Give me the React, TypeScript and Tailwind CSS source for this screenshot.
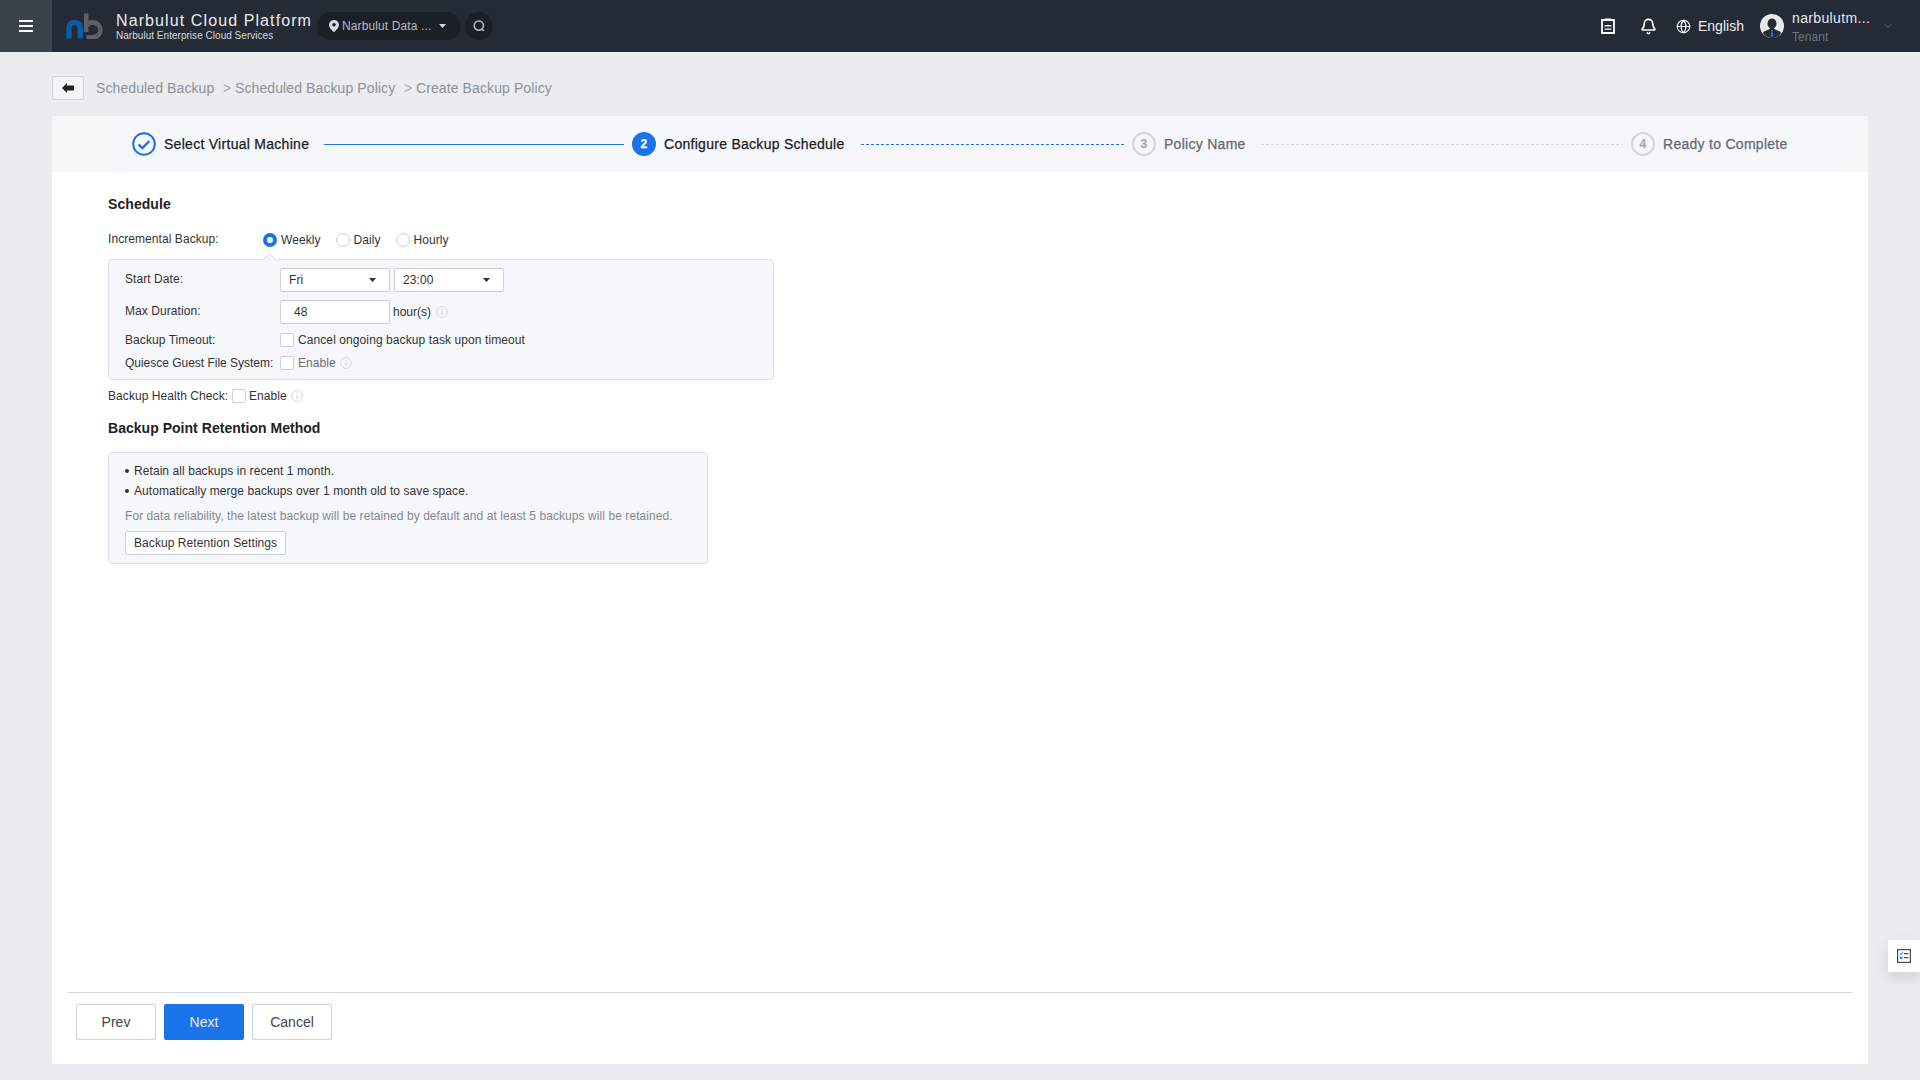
import React from "react";
import { Globe, Bell, ChevronDown } from "lucide-react";

function Caret({ className = "" }: { className?: string }) {
  return (
    <svg width="7" height="4" viewBox="0 0 7 4" className={className}>
      <path d="M0 0h7L3.5 4z" fill="currentColor" />
    </svg>
  );
}

function Logo() {
  return (
    <svg width="38" height="26" viewBox="0 0 38 26" className="shrink-0">
      <path d="M3 25.5V14.5c0-3 2.4-5 5.6-5s5.6 2 5.6 5v11" fill="none" stroke="#0b5cab" strokeWidth="5.4" />
      <path d="M20.2 0.5V19" fill="none" stroke="#5e6064" strokeWidth="4.4" />
      <path d="M20.5 12.3c1.4-1.9 3.4-2.9 6-2.9 4.4 0 8 3.4 8 7.6s-3.6 7.4-8 7.4h-6" fill="none" stroke="#5e6064" strokeWidth="4.6" />
    </svg>
  );
}

function Avatar() {
  return (
    <svg width="24" height="24" viewBox="0 0 24 24" className="shrink-0">
      <circle cx="12" cy="12" r="12" fill="#e9e9e9" />
      <path d="M12 4.6c-2.7 0-4.5 2.1-4.5 4.8 0 1.9.9 3.6 2.3 4.5v1.2l-4.6 2c-.9.4-1.7 1-2.2 2.1A12 12 0 0 0 12 24a12 12 0 0 0 9-4.8c-.5-1.1-1.3-1.7-2.2-2.1l-4.6-2v-1.2c1.4-.9 2.3-2.6 2.3-4.5 0-2.7-1.8-4.8-4.5-4.8z" fill="#262c36" />
      <path d="M11 16.2h2v1.4h-2zM11.1 18.2h1.8l.5 4.6h-2.8z" fill="#1a73e8" />
    </svg>
  );
}

function Radio({ checked, label }: { checked?: boolean; label: string }) {
  return (
    <div className="flex items-center gap-[4px]">
      {checked ? (
        <span className="flex h-[14px] w-[14px] items-center justify-center rounded-full bg-[#1a73e8]">
          <span className="h-[6px] w-[6px] rounded-full bg-white" />
        </span>
      ) : (
        <span className="h-[14px] w-[14px] rounded-full border border-[#ccd1da] bg-white" />
      )}
      <span>{label}</span>
    </div>
  );
}

function Check() {
  return <span className="h-[14px] w-[14px] shrink-0 rounded-[2px] border border-[#ccd1da] bg-white" />;
}

function Tip({ className = "" }: { className?: string }) {
  return (
    <svg width="12" height="12" viewBox="0 0 12 12" fill="none" className={`shrink-0 ${className}`}>
      <circle cx="6" cy="6" r="5.4" stroke="#d3d9e2" strokeWidth="1" />
      <path d="M6 5.2v3.6" stroke="#c3c9d3" strokeWidth="1" />
      <path d="M6 3v1.1" stroke="#c3c9d3" strokeWidth="1" />
    </svg>
  );
}

function Select({ value, className = "" }: { value: string; className?: string }) {
  return (
    <div className={`flex h-[24px] items-center justify-between rounded-[2px] border border-[#ccd1da] bg-white pl-[8px] pr-[13px] ${className}`}>
      <span>{value}</span>
      <Caret className="text-[#333]" />
    </div>
  );
}

function Num({ n, done }: { n: string; done?: boolean }) {
  return done ? (
    <span className="flex h-[24px] w-[24px] shrink-0 items-center justify-center rounded-full bg-[#1a73e8] text-[12px] font-bold text-white">{n}</span>
  ) : (
    <span className="flex h-[24px] w-[24px] shrink-0 items-center justify-center rounded-full border-2 border-[#d2d6de] text-[12px] font-bold text-[#a5a9b2]">{n}</span>
  );
}

export default function App() {
  return (
    <div className="relative flex h-[1080px] w-[1920px] flex-col overflow-hidden bg-[#ebecf0] [font-family:'Liberation_Sans',Arial,sans-serif] text-[12px] tracking-[0.07px] text-[#333]">
      <header className="flex h-[52px] shrink-0 items-center bg-[#242b36] text-white">
        <div className="flex h-[52px] w-[52px] shrink-0 items-center justify-center bg-[#3a424c]">
          <svg width="14" height="12" viewBox="0 0 14 12" fill="#fff">
            <path d="M0 0h14v2H0zM0 5h14v2H0zM0 10h14v2H0z" />
          </svg>
        </div>
        <div className="ml-[14px] flex items-center">
          <Logo />
        </div>
        <div className="ml-[12px] flex w-[201px] shrink-0 flex-col">
          <span className="text-[16px] leading-[20px] tracking-[1.1px] text-[#e9ebee] whitespace-nowrap">Narbulut Cloud Platform</span>
          <span className="mt-[-1px] text-[10px] leading-[12px] tracking-[0.03px] text-[#d6d9de] whitespace-nowrap">Narbulut Enterprise Cloud Services</span>
        </div>
        <div className="flex h-[28px] w-[144px] shrink-0 items-center rounded-full bg-[#1b2028] pl-[12px] text-[#b5b9c0]">
          <svg width="10" height="12" viewBox="0 0 10 12" className="shrink-0">
            <path fillRule="evenodd" d="M5 0C2.2 0 0 2.2 0 4.9 0 8.2 5 12 5 12s5-3.8 5-7.1C10 2.2 7.8 0 5 0zm0 6.6a1.8 1.8 0 1 1 0-3.6 1.8 1.8 0 0 1 0 3.6z" fill="#d8dade" />
          </svg>
          <span className="ml-[3px] w-[90px] whitespace-nowrap tracking-[0.12px]">Narbulut Data ...</span>
          <Caret className="ml-[7px] text-[#d8dade]" />
        </div>
        <div className="ml-[4px] flex h-[28px] w-[28px] shrink-0 items-center justify-center rounded-full bg-[#1b2028]">
          <svg width="14" height="14" viewBox="0 0 14 14" fill="none" stroke="#b5b9c0" strokeWidth="1.6">
            <circle cx="6.8" cy="6.6" r="4.6" />
            <path d="M9.8 10l2 2" />
          </svg>
        </div>
        <div className="ml-auto flex items-center">
          <svg width="14" height="16" viewBox="0 0 14 16" className="shrink-0">
            <path d="M1 2h12v13H1z" fill="none" stroke="#fff" strokeWidth="1.8" />
            <path d="M3.5 0.5h7v2.5h-7zM3.6 7h6.8v1.4H3.6zM3.6 10.4h6.8v1.4H3.6z" fill="#fff" />
          </svg>
          <Bell size={17} strokeWidth={2.3} className="ml-[25px] text-white" />
          <Globe size={15} strokeWidth={1.8} className="ml-[19px] text-white" />
          <span className="ml-[7px] w-[45px] text-[14px] leading-[20px] tracking-normal text-[#eceef1]">English</span>
          <div className="ml-[17px]">
            <Avatar />
          </div>
          <div className="ml-[8px] mt-[2px] flex w-[77px] flex-col">
            <span className="text-[14px] leading-[16px] text-[#e5e7eb] whitespace-nowrap tracking-[0.35px]">narbulutm...</span>
            <span className="mt-[4px] text-[12px] leading-[14px] text-[#6b7280]">Tenant</span>
          </div>
          <ChevronDown size={12} strokeWidth={1.5} className="ml-[13px] mr-[26px] text-[#6b7280]" />
        </div>
      </header>

      <main className="flex min-h-0 flex-1 flex-col px-[52px] pb-[16px] pt-[24px]">
        <nav className="flex h-[24px] items-center text-[14px] tracking-[0.1px] text-[#8d9098]">
          <button className="flex h-[24px] w-[32px] items-center justify-center rounded-[2px] border border-[#d0d4dc] bg-[#f4f5f7] text-[#222]">
            <svg width="12" height="10" viewBox="0 0 12 10">
              <path d="M0 5l5-5v2.6h7v4.8H5V10z" fill="currentColor" />
            </svg>
          </button>
          <span className="ml-[12px] w-[119px] whitespace-nowrap">Scheduled Backup</span>
          <span className="ml-[8px] w-[12px] text-[#a5a8af]">&gt;</span>
          <span className="w-[161px] whitespace-nowrap">Scheduled Backup Policy</span>
          <span className="ml-[8px] w-[12px] text-[#a5a8af]">&gt;</span>
          <span className="whitespace-nowrap">Create Backup Policy</span>
        </nav>

        <section className="mt-[16px] flex min-h-0 flex-1 flex-col bg-white">
          <div className="flex h-[56px] shrink-0 items-center bg-[linear-gradient(90deg,#f7f7f7_0,#f7f7f7_64px,#f5f7fb_64px,#f5f7fb_calc(100%-66px),#f7f7f7_100%)] pl-[80px] text-[14px] tracking-[0.28px] [-webkit-text-stroke:0.25px_currentColor]">
            <svg width="24" height="24" viewBox="0 0 24 24" fill="none" stroke="#1a73e8" strokeWidth="2" className="shrink-0">
              <circle cx="12" cy="12" r="10.8" />
              <path d="M6.6 12.4l3.8 3.6 7-7" strokeWidth="2.4" />
            </svg>
            <span className="ml-[8px] w-[144px] whitespace-nowrap text-[#1b1b1b]">Select Virtual Machine</span>
            <span className="ml-[16px] h-[1px] w-[300px] bg-[#1a73e8]" />
            <span className="ml-[8px]"><Num n="2" done /></span>
            <span className="ml-[8px] w-[181px] whitespace-nowrap text-[#1b1b1b]">Configure Backup Schedule</span>
            <span className="ml-[16px] h-[1px] w-[263px] bg-[repeating-linear-gradient(90deg,#1a73e8_0,#1a73e8_3px,transparent_3px,transparent_5px)]" />
            <span className="ml-[8px]"><Num n="3" /></span>
            <span className="ml-[8px] w-[81px] whitespace-nowrap text-[#666a70]">Policy Name</span>
            <span className="ml-[16px] h-[1px] w-[362px] bg-[repeating-linear-gradient(90deg,#d6d9e0_0,#d6d9e0_3px,transparent_3px,transparent_5px)]" />
            <span className="ml-[8px]"><Num n="4" /></span>
            <span className="ml-[8px] whitespace-nowrap text-[#666a70]">Ready to Complete</span>
          </div>

          <div className="flex flex-col pl-[56px] pt-[22px]">
            <h2 className="text-[14px] font-bold leading-[20px] text-[#222]">Schedule</h2>

            <div className="mt-[16px] flex h-[20px] items-center">
              <span className="w-[155px] pb-[2px] leading-[18px]">Incremental Backup:</span>
              <div className="flex items-center gap-[15px]">
                <Radio checked label="Weekly" />
                <Radio label="Daily" />
                <Radio label="Hourly" />
              </div>
            </div>

            <div className="relative mt-[9px] w-[666px] rounded-[4px] border border-[#dde1e9] bg-[#f5f7fb] pb-[9px] pl-[16px] pt-[8px]">
              <span className="absolute left-[156px] top-[-5px] h-[9px] w-[9px] rotate-45 border-l border-t border-[#dde1e9] bg-[#f5f7fb]" />
              <div className="flex items-center">
                <span className="w-[155px] pb-[2px]">Start Date:</span>
                <Select value="Fri" className="w-[110px]" />
                <Select value="23:00" className="ml-[4px] w-[110px]" />
              </div>
              <div className="mt-[8px] flex items-center">
                <span className="w-[155px] pb-[2px]">Max Duration:</span>
                <div className="flex h-[24px] w-[110px] items-center rounded-[2px] border border-[#ccd1da] bg-white pl-[13px]">48</div>
                <span className="ml-[3px] pb-[1px] tracking-normal">hour(s)</span>
                <Tip className="ml-[5px]" />
              </div>
              <div className="mt-[9px] flex h-[14px] items-center">
                <span className="w-[155px] pb-[1px]">Backup Timeout:</span>
                <Check />
                <span className="ml-[4px] tracking-[0.09px]">Cancel ongoing backup task upon timeout</span>
              </div>
              <div className="mt-[9px] flex h-[14px] items-center">
                <span className="w-[155px] whitespace-nowrap pb-[1px] tracking-[-0.02px]">Quiesce Guest File System:</span>
                <Check />
                <span className="ml-[4px] text-[#6b6f76]">Enable</span>
                <Tip className="ml-[4px]" />
              </div>
            </div>

            <div className="mt-[6px] flex h-[20px] items-center">
              <span className="w-[124px] whitespace-nowrap pb-[1px]">Backup Health Check:</span>
              <Check />
              <span className="ml-[3px] pb-[1px]">Enable</span>
              <Tip className="ml-[4px]" />
            </div>

            <h2 className="mt-[12px] text-[14px] font-bold leading-[20px] tracking-[0.03px] text-[#222]">Backup Point Retention Method</h2>

            <div className="mt-[14px] w-[600px] rounded-[4px] border border-[#dde1e9] bg-[#f5f7fb] pb-[8px] pl-[16px] pt-[8px]">
              <div className="flex h-[20px] items-center">
                <span className="h-[4px] w-[4px] rounded-full bg-[#333]" />
                <span className="ml-[5px]">Retain all backups in recent 1 month.</span>
              </div>
              <div className="flex h-[20px] items-center">
                <span className="h-[4px] w-[4px] rounded-full bg-[#333]" />
                <span className="ml-[5px]">Automatically merge backups over 1 month old to save space.</span>
              </div>
              <div className="mt-[5px] h-[20px] leading-[20px] text-[#85888f]">For data reliability, the latest backup will be retained by default and at least 5 backups will be retained.</div>
              <button className="mt-[5px] flex h-[24px] items-center rounded-[2px] border border-[#ccd1da] bg-white px-[8px]">Backup Retention Settings</button>
            </div>
          </div>

          <footer className="mx-[16px] mt-auto flex gap-[8px] border-t border-[#d5d8df] pb-[24px] pl-[8px] pt-[11px] text-[14px] tracking-normal">
            <button className="h-[36px] w-[80px] rounded-[2px] border border-[#ccd1da] bg-white text-[#444]">Prev</button>
            <button className="h-[36px] w-[80px] rounded-[2px] bg-[#1a73e8] text-[#e8f1fd]">Next</button>
            <button className="h-[36px] w-[80px] rounded-[2px] border border-[#ccd1da] bg-white text-[#444]">Cancel</button>
          </footer>
        </section>
      </main>

      <div className="absolute right-0 top-[940px] flex h-[32px] w-[32px] items-center justify-center bg-white shadow-[0_6px_14px_rgba(60,70,90,0.15)]">
        <svg width="14" height="14" viewBox="0 0 14 14" fill="none">
          <rect x="0.6" y="0.6" width="12.8" height="12.8" stroke="#3f4a5c" strokeWidth="1.2" />
          <path d="M7 4.6h4.5M7 8.6h4.5" stroke="#3f4a5c" strokeWidth="1.2" />
          <path d="M3 4.5l1 1 2-2.4" stroke="#3b8cf0" strokeWidth="1.1" />
          <path d="M3 7.6h2.6v2.4H3z" fill="#3b8cf0" />
        </svg>
      </div>
    </div>
  );
}
